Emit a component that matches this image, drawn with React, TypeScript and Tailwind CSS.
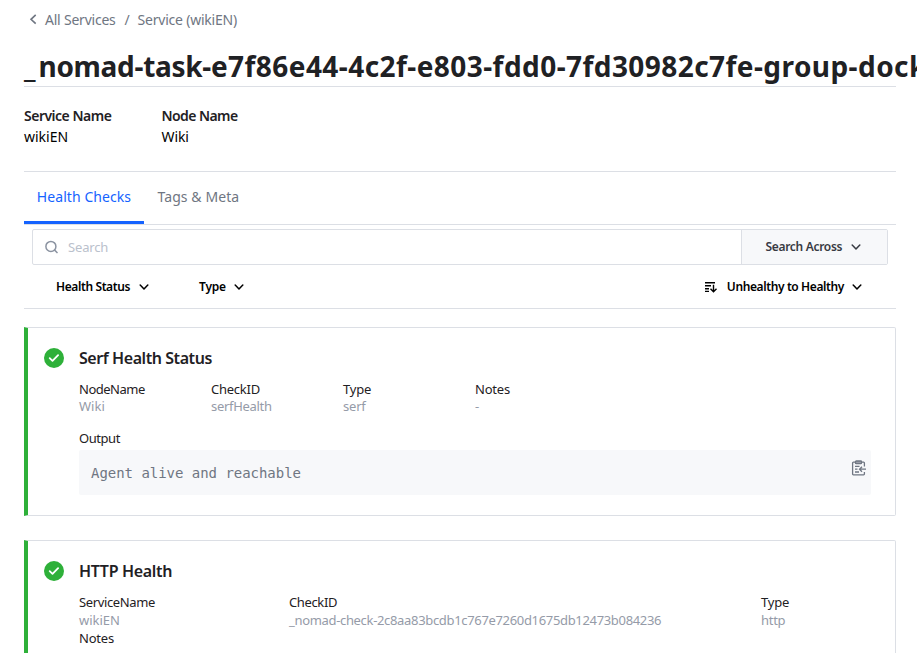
import React from "react";

const Chevron = ({ className = "" }: { className?: string }) => (
  <svg width="10" height="6" viewBox="0 0 10 6" fill="none" stroke="currentColor" strokeWidth="1.5" strokeLinecap="round" strokeLinejoin="round" className={className}>
    <path d="M1.2 1L5 5l3.8-4" />
  </svg>
);

const Check = () => (
  <svg width="20" height="20" viewBox="0 0 20 20" className="block shrink-0">
    <circle cx="10" cy="10" r="10" fill="#2eb039" />
    <path d="M5.7 10.1l2.8 2.7 5.6-5.6" fill="none" stroke="#fff" strokeWidth="1.8" strokeLinecap="round" strokeLinejoin="round" />
  </svg>
);

const ClipboardCopy = () => (
  <svg width="16" height="16" viewBox="0 0 16 16" fill="none" stroke="#6f7682" strokeWidth="1.3" className="mt-[10px] -mr-[8px] shrink-0">
    <path d="M4 2.2H2.4a.8.8 0 0 0-.8.8v11a.8.8 0 0 0 .8.8h10.2a.8.8 0 0 0 .8-.8v-2M13.4 6.5V3a.8.8 0 0 0-.8-.8H11" />
    <rect x="4.5" y="1" width="6" height="2.6" rx=".7" fill="#9b9fa9" />
    <path d="M4 6.4h4.5M4 9.2h2.5M4 12h4M15 9.2H8.5M11 6.7L8.5 9.2l2.5 2.5" />
  </svg>
);

type FieldProps = { label: string; value: string; className: string; labelClass?: string; valueClass?: string };

const Field = ({ label, value, className, labelClass = "", valueClass = "" }: FieldProps) => (
  <div className={`shrink-0 text-[13px] leading-[17px] ${className}`}>
    <dt className={`h-[17px] text-[#1f2124] ${labelClass}`}>{label}</dt>
    <dd className={`h-[17px] text-[#959ba8] ${valueClass}`}>{value}</dd>
  </div>
);

export default function App() {
  return (
    <div className="h-[653px] w-[917px] overflow-hidden bg-white px-6 font-['Noto_Sans',sans-serif] text-[#1f2124]">
      <nav className="flex h-[39px] items-center text-[14px] tracking-[-0.22px] text-[#6f7682]">
        <svg width="8" height="11" viewBox="0 0 8 11" fill="none" stroke="currentColor" strokeWidth="1.6" className="mr-[8px] ml-[5px]">
          <path d="M6.7 0.9L2 5.3l4.7 4.4" />
        </svg>
        <span>All Services</span>
        <span className="mr-[8px] ml-[9px]">/</span>
        <span>Service (wikiEN)</span>
      </nav>
      <h1 className="h-[48px] w-[872px] border-b border-[#dcdfe5] text-[28px] leading-[55px] font-bold tracking-[-0.3px] whitespace-nowrap">
        <span className="tracking-[3px]">_</span>nomad-task-<span className="tracking-[0.44px]">e7f86e44-4c2f-e803-fdd0-7fd30982c7fe-group-dock</span>
      </h1>
      <dl className="flex h-[85px] w-[872px] border-b border-[#dcdfe5] pt-[18px] text-[14px] leading-[21px] text-black">
        <div className="w-[137.5px]"><dt className="font-semibold tracking-[-0.5px] text-[#1f2124]">Service Name</dt><dd>wikiEN</dd></div>
        <div><dt className="font-semibold tracking-[-0.58px] text-[#1f2124]">Node Name</dt><dd className="tracking-[-0.1px]">Wiki</dd></div>
      </dl>
      <div className="flex h-[53px] w-[872px] border-b border-[#dcdfe5] text-[14px] leading-[50px]">
        <div className="h-[52px] w-[120px] border-b-[3px] border-[#1563ff] text-center tracking-[0.07px] text-[#1563ff]">Health Checks</div>
        <div className="ml-[13.5px] tracking-[0.08px] text-[#6f7682]">Tags &amp; Meta</div>
      </div>
      <div className="h-[84px] w-[872px] border-b border-[#dcdfe5] px-2 pt-1">
        <div className="flex h-[36px] rounded-[2px] border border-[#dcdfe5]">
          <div className="flex flex-1 items-center pl-[11.5px] text-[13px] tracking-[-0.15px] text-[#bac1cc]">
            <svg width="13" height="14" viewBox="0 0 13 14" fill="none" stroke="#8b93a1" strokeWidth="1.5" className="mr-[10.5px]">
              <circle cx="5.9" cy="6.4" r="5" /><path d="M9.4 9.9l3.1 3.1" />
            </svg>
            <span className="pt-px">Search</span>
          </div>
          <div className="flex w-[146px] items-center border-l border-[#dcdfe5] bg-[#f7f8fa] pl-[23.5px] text-[12px] font-semibold tracking-[-0.31px] text-[#373a42]">
            Search Across<Chevron className="ml-[9px]" />
          </div>
        </div>
        <div className="flex h-[43px] items-center pl-6 text-[12px] font-semibold tracking-[-0.39px] text-black">
          <span>Health Status</span><Chevron className="ml-[9px]" />
          <span className="ml-[50px] tracking-[-0.2px]">Type</span><Chevron className="ml-[8px]" />
          <svg width="14" height="12" viewBox="0 0 14 12" fill="none" stroke="currentColor" strokeWidth="1.4" className="ml-auto">
            <path d="M1 1.7h10M1 4.8h6M1 7.7h4M1 10.4h4M9.5 3.7v6.8M6.5 7.7l3 3 3-3" />
          </svg>
          <span className="ml-[9px]">Unhealthy to Healthy</span><Chevron className="mr-[26px] ml-[8px]" />
        </div>
      </div>
      <section className="mt-[18px] flex h-[189px] w-[872px] rounded-r-[2px] border border-l-4 border-[#dcdfe5] border-l-[#2eb039] pt-[20px] pl-4">
        <Check />
        <div className="ml-[15px] w-[792px]">
          <h2 className="h-[20px] text-[16px] leading-[20px] font-semibold tracking-[-0.43px]">Serf Health Status</h2>
          <dl className="mt-[13px] flex h-[48px]">
            <Field label="NodeName" value="Wiki" className="w-[132px]" labelClass="tracking-[-0.5px]" />
            <Field label="CheckID" value="serfHealth" className="w-[132px]" labelClass="tracking-[-0.25px]" valueClass="tracking-[-0.3px]" />
            <Field label="Type" value="serf" className="w-[132px]" labelClass="tracking-[-0.2px]" valueClass="tracking-[-0.2px]" />
            <Field label="Notes" value="-" className="w-[132px]" labelClass="tracking-[-0.2px]" />
          </dl>
          <div className="h-[21px] text-[13px] leading-[18px] tracking-[-0.45px]">Output</div>
          <div className="flex h-[45px] justify-between rounded-[2px] bg-[#f7f8fa] px-3 font-['DejaVu_Sans_Mono',monospace] text-[14px] leading-[46px] tracking-[-0.03px] text-[#6f7682]">
            <span>Agent alive and reachable</span>
            <ClipboardCopy />
          </div>
        </div>
      </section>
      <section className="mt-6 flex h-[189px] w-[872px] rounded-r-[2px] border border-l-4 border-[#dcdfe5] border-l-[#2eb039] pt-[20px] pl-4">
        <Check />
        <div className="ml-[15px] w-[792px]">
          <h2 className="h-[20px] text-[16px] leading-[20px] font-semibold tracking-[-0.33px]">HTTP Health</h2>
          <dl className="mt-[13px] flex h-[36px]">
            <Field label="ServiceName" value="wikiEN" className="w-[210px]" labelClass="tracking-[-0.37px]" valueClass="leading-[19px]" />
            <Field label="CheckID" value="_nomad-check-2c8aa83bcdb1c767e7260d1675db12473b084236" className="w-[472px]" labelClass="tracking-[-0.37px]" valueClass="leading-[19px] tracking-[-0.33px]" />
            <Field label="Type" value="http" className="w-[110px]" labelClass="tracking-[-0.2px]" valueClass="leading-[19px] tracking-[-0.3px]" />
          </dl>
          <div className="text-[13px] leading-[17px] tracking-[-0.2px]">Notes</div>
        </div>
      </section>
    </div>
  );
}
